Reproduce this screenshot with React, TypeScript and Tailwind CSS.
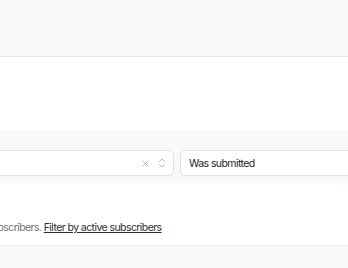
import { X, ChevronsUpDown } from "lucide-react";

// 구독자 필터 영역

const App = () => {
  return (
    <div className="w-[348px] h-[268px] overflow-hidden bg-white font-['Inter',sans-serif] tracking-[-0.036em]">
      <div className="h-[57px] bg-[#f8f9fa] border-b border-[#e3e6ea]" />
      <div className="h-[73px] bg-white" />
      <div className="h-[53px] bg-[#f8f9fa] flex items-end pb-[7px] gap-[6px] -ml-[200px]">
        <div className="w-[374px] h-[26px] shrink-0 bg-white border border-[#dfe2e6] rounded-[5px] flex items-center justify-end gap-[5px] pr-[5px] text-[#9aa0a8]">
          <X size={11} strokeWidth={1.5} />
          <ChevronsUpDown size={12} strokeWidth={1.5} />
        </div>
        <div className="w-[200px] h-[26px] shrink-0 bg-white border border-[#dfe2e6] rounded-[5px] flex items-center pl-[8px] pt-[1px] text-[10.5px] text-[#1f2328]">
          Was submitted
        </div>
      </div>
      <div className="h-[62px] bg-white flex items-end pb-[9px] -ml-[66px]">
        <p className="text-[10.5px] text-[#6b7280] whitespace-nowrap">
          Showing all subscribers.{" "}
          <span className="text-[#2b2f33] underline">Filter by active subscribers</span>
        </p>
      </div>
      <div className="h-[23px] bg-[#f8f9fa] border-t border-[#eef0f2]" />
    </div>
  );
};

export default App;
